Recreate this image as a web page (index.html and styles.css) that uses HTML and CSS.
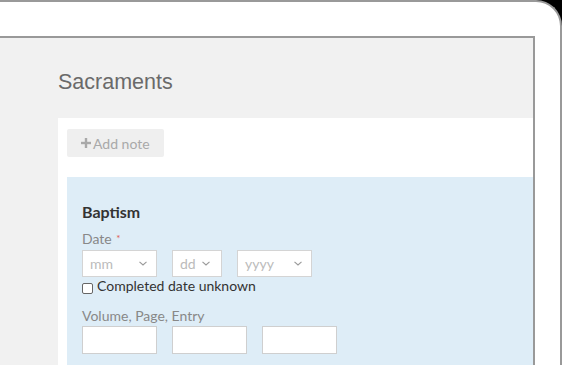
FILE: index.html
```html
<!DOCTYPE html>
<html lang="en">

<head>
    <meta charset="UTF-8">
    <title>Sacraments</title>
    <link rel="stylesheet" href="styles.css">
</head>

<body>
    <div class="device">
        <div class="screen">
            <h1 class="page-title">Sacraments</h1>
            <div class="panel">
                <button class="btn-note" type="button">
                    <svg class="plus" width="10" height="10" viewBox="0 0 10 10">
                        <rect x="3.8" y="0" width="2.4" height="10" fill="#a9a9a9"/>
                        <rect x="0" y="3.8" width="10" height="2.4" fill="#a9a9a9"/>
                    </svg>Add note
                </button>

                <div class="sacrament">
                    <h2 class="sacrament-title">Baptism</h2>

                    <div class="field-label">Date <span class="req">*</span></div>
                    <div class="date-row">
                        <div class="select wide"><span>mm</span>
                            <svg class="chev" width="8" height="5" viewBox="0 0 8 5"><path d="M0.5 0.8 L4 4 L7.5 0.8" fill="none" stroke="#999" stroke-width="1.1"/></svg>
                        </div>
                        <div class="select narrow"><span>dd</span>
                            <svg class="chev" width="8" height="5" viewBox="0 0 8 5"><path d="M0.5 0.8 L4 4 L7.5 0.8" fill="none" stroke="#999" stroke-width="1.1"/></svg>
                        </div>
                        <div class="select wide"><span>yyyy</span>
                            <svg class="chev" width="8" height="5" viewBox="0 0 8 5"><path d="M0.5 0.8 L4 4 L7.5 0.8" fill="none" stroke="#999" stroke-width="1.1"/></svg>
                        </div>
                    </div>

                    <label class="check">
                        <span class="box"></span>Completed date unknown
                    </label>

                    <div class="field-label vol">Volume, Page, Entry</div>
                    <div class="input-row">
                        <input type="text" name="volume">
                        <input type="text" name="page">
                        <input type="text" name="entry">
                    </div>
                </div>
            </div>
        </div>
    </div>
</body>
</html>
```

FILE: styles.css
```css
body {
    margin: 0;
    background-color: #000;
    height: 365px;
    overflow: hidden;
    font-family: Lato, "Open Sans", sans-serif;
}

.device {
    box-sizing: border-box;
    height: 365px;
    padding-top: 34px;
    background-color: #fff;
    border-top: 2px solid #999;
    border-right: 2px solid #999;
    border-top-right-radius: 26px;
}

.screen {
    box-sizing: border-box;
    height: 100%;
    overflow: hidden;
    margin-right: 25px;
    padding-left: 58px;
    background-color: #f1f1f1;
    border-top: 2px solid #999;
    border-right: 2px solid #999;
}

.page-title {
    margin: 0;
    padding-top: 32px;
    font-family: "Liberation Sans", Arial, sans-serif;
    font-weight: normal;
    font-size: 21.5px;
    line-height: 24px;
    color: #6a6a6a;
}

.panel {
    margin-top: 24px;
    padding: 11px 0 0 9px;
    background-color: #fff;
}

.btn-note {
    display: flex;
    align-items: center;
    gap: 2px;
    width: 97px;
    height: 28px;
    padding: 0 0 0 14px;
    border: none;
    border-radius: 2px;
    background-color: #efefef;
    font-family: Lato, sans-serif;
    font-size: 14px;
    color: #a9a9a9;
}

.sacrament {
    margin-top: 20px;
    padding: 25px 0 11px 15px;
    background-color: #deedf7;
}

.sacrament-title {
    margin: 0;
    font-size: 16px;
    line-height: 19px;
    font-weight: bold;
    color: #333;
}

.field-label {
    margin-top: 9px;
    font-size: 14px;
    line-height: 17px;
    color: #888;
}

.req {
    color: #e05a4f;
    font-size: 10px;
    vertical-align: top;
    margin-left: 1px;
}

.date-row {
    display: flex;
    gap: 15px;
    margin-top: 3px;
}

.select {
    display: flex;
    align-items: center;
    justify-content: space-between;
    box-sizing: border-box;
    height: 27px;
    padding: 0 9px 0 7px;
    background-color: #fff;
    border: 1px solid #d4d4d4;
    font-size: 14px;
    color: #bbb;
}

.select.wide {
    width: 75px;
}

.select.narrow {
    width: 50px;
    padding-right: 11px;
}

.check {
    display: flex;
    align-items: flex-end;
    gap: 4px;
    font-size: 14px;
    line-height: 17px;
    color: #333;
}

.check .box {
    width: 9px;
    height: 9px;
    border: 1px solid #666;
    border-radius: 2px;
    background-color: #fff;
}

.field-label.vol {
    margin-top: 13px;
}

.input-row {
    display: flex;
    gap: 15px;
    margin-top: 2px;
}

.input-row input {
    box-sizing: border-box;
    width: 75px;
    height: 28px;
    margin: 0;
    border: 1px solid #cfcfcf;
    background-color: #fff;
}
```
